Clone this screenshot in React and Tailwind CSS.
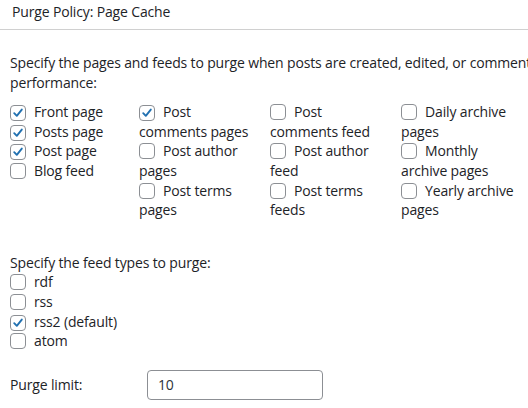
import React from 'react';

const font = { fontFamily: '"Open Sans", "Noto Sans", sans-serif' };

const Box = ({ checked }) => (
  <span className="inline-flex w-4 h-4 mr-[8px] align-[-3px] rounded-[4px] border border-[#8c8f94] bg-white items-center justify-center">
    {checked && (
      <svg width="14" height="14" viewBox="0 0 14 14">
        <path d="M3.2 7.2 L5.8 9.8 L10.8 3.6" fill="none" stroke="#2271b1" strokeWidth="1.9" strokeLinecap="round" strokeLinejoin="round" />
      </svg>
    )}
  </span>
);

const Item = ({ label, checked }) => (
  <label className="block">
    <Box checked={checked} />
    {label}
  </label>
);

const columns = [
  [
    ['Front page', true],
    ['Posts page', true],
    ['Post page', true],
    ['Blog feed', false],
  ],
  [
    ['Post comments pages', true],
    ['Post author pages', false],
    ['Post terms pages', false],
  ],
  [
    ['Post comments feed', false],
    ['Post author feed', false],
    ['Post terms feeds', false],
  ],
  [
    ['Daily archive pages', false],
    ['Monthly archive pages', false],
    ['Yearly archive pages', false],
  ],
];

const feeds = [
  ['rdf', false],
  ['rss', false],
  ['rss2 (default)', true],
  ['atom', false],
];

export default function App() {
  return (
    <div className="w-[528px] h-[408px] overflow-hidden bg-white text-[#1d2327] text-[14px] leading-[19.6px] tracking-[-0.15px]" style={font}>
      {/* Header */}
      <div className="h-[30px] pt-[2px] px-3 border-b border-[#d0d0d0]">Purge Policy: Page Cache</div>

      <div className="px-[10px]">
        <p className="mt-[23px] whitespace-nowrap">
          Specify the pages and feeds to purge when posts are created, edited, or comment
          <br />
          performance:
        </p>

        {/* Pages grid */}
        <div className="mt-[10px] grid grid-cols-[129px_131px_131px_127px]">
          {columns.map((col, i) => (
            <div key={i} className="pr-2">
              {col.map(([label, checked]) => (
                <Item key={label} label={label} checked={checked} />
              ))}
            </div>
          ))}
        </div>

        <p className="mt-[33px]">Specify the feed types to purge:</p>
        {feeds.map(([label, checked]) => (
          <Item key={label} label={label} checked={checked} />
        ))}

        {/* Purge limit */}
        <div className="mt-[19px] flex items-center">
          <span className="w-[137px]">Purge limit:</span>
          <input
            type="text"
            defaultValue="10"
            className="w-[176px] h-[30px] px-[10px] rounded-[4px] border border-[#8c8f94] text-[#2c3338] outline-none"
            style={font}
          />
        </div>
      </div>
    </div>
  );
}
